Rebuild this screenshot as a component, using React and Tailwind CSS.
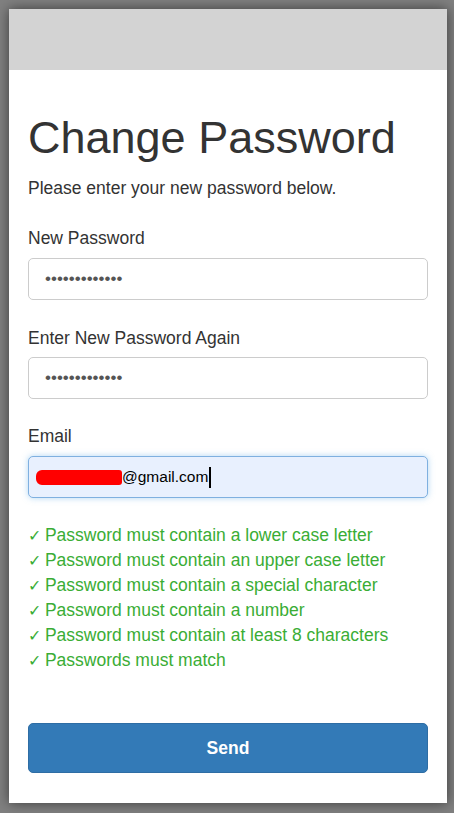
export default function App() {
	const checks = [
		'Password must contain a lower case letter',
		'Password must contain an upper case letter',
		'Password must contain a special character',
		'Password must contain a number',
		'Password must contain at least 8 characters',
		'Passwords must match',
	];

	return (
		<div className="min-h-[813px] bg-[#808080] pt-[9px] pl-[9px] pr-[7px] font-['Liberation_Sans',Arial,sans-serif] text-[#333]">
			<div className="bg-white shadow-[0_0_12px_rgba(0,0,0,0.55)] min-h-[793px]">
				<div className="h-[61px] bg-[#d3d3d3]" />
				<div className="px-[19px] pt-[43px] pb-[30px]">
					<h1 className="text-[45px] leading-[50px] text-[#333]">Change Password</h1>
					<p className="mt-[13px] text-[17.5px] leading-[25px]">Please enter your new password below.</p>

					<div className="mt-[25px]">
						<div className="text-[17.5px] leading-[25px]">New Password</div>
						<div className="mt-[7px] h-[42px] border border-[#ccc] rounded-[5px] flex items-center px-[16px] text-[17px] text-[#555]">
							•••••••••••••
						</div>
					</div>

					<div className="mt-[26px]">
						<div className="text-[17.5px] leading-[25px]">Enter New Password Again</div>
						<div className="mt-[6px] h-[42px] border border-[#ccc] rounded-[5px] flex items-center px-[16px] text-[17px] text-[#555]">
							•••••••••••••
						</div>
					</div>

					<div className="mt-[25px]">
						<div className="text-[17.5px] leading-[25px]">Email</div>
						<div className="mt-[7px] h-[42px] border border-[#7fb0e0] bg-[#e8f0fe] shadow-[0_0_6px_rgba(102,175,233,0.5)] rounded-[5px] flex items-center pl-[7px] text-[15.5px] text-black">
							<span className="inline-block w-[86px] h-[15px] bg-[#ff0000] rounded-l-[6px] rounded-r-[3px]" />
							<span>@gmail.com</span>
							<span className="inline-block w-[2px] h-[21px] bg-black ml-[1px]" />
						</div>
					</div>

					<div className="mt-[25px] text-[17.5px] leading-[25px] text-[#3aad35]">
						{checks.map((c) => (
							<div key={c}>
								<span className="text-[16px] mr-[-1px]">✓</span> {c}
							</div>
						))}
					</div>

					<button className="mt-[50px] w-full h-[50px] rounded-[5px] bg-[#337ab7] border border-[#2e6da4] text-white font-bold text-[17.5px]">
						Send
					</button>
				</div>
			</div>
		</div>
	);
}
